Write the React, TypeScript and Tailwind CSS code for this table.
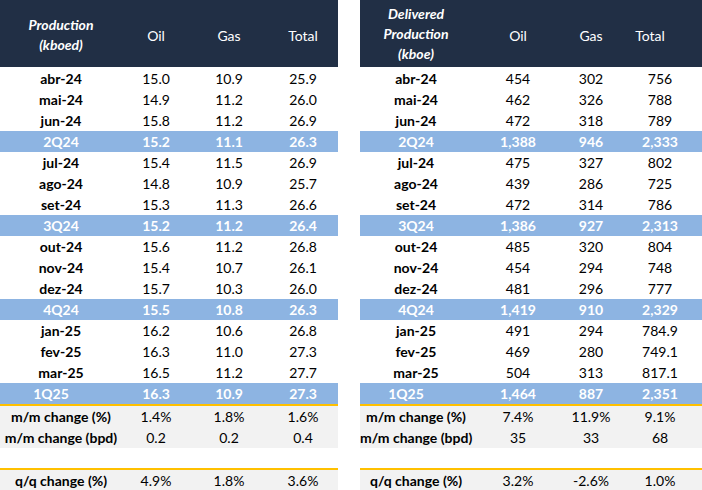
import React from "react";

type Row = { label: string; v: string[]; q?: boolean };

const leftRows: Row[] = [
  { label: "abr-24", v: ["15.0", "10.9", "25.9"] },
  { label: "mai-24", v: ["14.9", "11.2", "26.0"] },
  { label: "jun-24", v: ["15.8", "11.2", "26.9"] },
  { label: "2Q24", v: ["15.2", "11.1", "26.3"], q: true },
  { label: "jul-24", v: ["15.4", "11.5", "26.9"] },
  { label: "ago-24", v: ["14.8", "10.9", "25.7"] },
  { label: "set-24", v: ["15.3", "11.3", "26.6"] },
  { label: "3Q24", v: ["15.2", "11.2", "26.4"], q: true },
  { label: "out-24", v: ["15.6", "11.2", "26.8"] },
  { label: "nov-24", v: ["15.4", "10.7", "26.1"] },
  { label: "dez-24", v: ["15.7", "10.3", "26.0"] },
  { label: "4Q24", v: ["15.5", "10.8", "26.3"], q: true },
  { label: "jan-25", v: ["16.2", "10.6", "26.8"] },
  { label: "fev-25", v: ["16.3", "11.0", "27.3"] },
  { label: "mar-25", v: ["16.5", "11.2", "27.7"] },
  { label: "1Q25", v: ["16.3", "10.9", "27.3"], q: true },
];

const rightRows: Row[] = [
  { label: "abr-24", v: ["454", "302", "756"] },
  { label: "mai-24", v: ["462", "326", "788"] },
  { label: "jun-24", v: ["472", "318", "789"] },
  { label: "2Q24", v: ["1,388", "946", "2,333"], q: true },
  { label: "jul-24", v: ["475", "327", "802"] },
  { label: "ago-24", v: ["439", "286", "725"] },
  { label: "set-24", v: ["472", "314", "786"] },
  { label: "3Q24", v: ["1,386", "927", "2,313"], q: true },
  { label: "out-24", v: ["485", "320", "804"] },
  { label: "nov-24", v: ["454", "294", "748"] },
  { label: "dez-24", v: ["481", "296", "777"] },
  { label: "4Q24", v: ["1,419", "910", "2,329"], q: true },
  { label: "jan-25", v: ["491", "294", "784.9"] },
  { label: "fev-25", v: ["469", "280", "749.1"] },
  { label: "mar-25", v: ["504", "313", "817.1"] },
  { label: "1Q25", v: ["1,464", "887", "2,351"], q: true },
];

const leftChanges = {
  mm: ["1.4%", "1.8%", "1.6%"],
  bpd: ["0.2", "0.2", "0.4"],
  qq: ["4.9%", "1.8%", "3.6%"],
};

const rightChanges = {
  mm: ["7.4%", "11.9%", "9.1%"],
  bpd: ["35", "33", "68"],
  qq: ["3.2%", "-2.6%", "1.0%"],
};

function Table({
  title,
  rows,
  changes,
  cols,
  totalHeadPad,
  titlePad,
}: {
  title: string[];
  rows: Row[];
  changes: { mm: string[]; bpd: string[]; qq: string[] };
  cols: string;
  totalHeadPad: string;
  titlePad: string;
}) {
  return (
    <div className="flex flex-col">
      <div className={`grid ${cols} h-[67px] items-center bg-[#212f45] text-[14px] text-white`}>
        <div className={`flex flex-col items-center leading-[20px] font-bold italic ${titlePad}`}>
          {title.map((t) => (
            <span key={t}>{t}</span>
          ))}
        </div>
        <div className="pt-[3px] text-center">Oil</div>
        <div className="pt-[3px] text-center">Gas</div>
        <div className={`pt-[3px] text-center ${totalHeadPad}`}>Total</div>
      </div>
      <div className="h-px" />
      {rows.map((r) => (
        <div
          key={r.label}
          className={`grid ${cols} h-[21px] items-center text-[14px] ${
            r.q ? "bg-[#8db4e2] font-bold text-white" : "text-black"
          }`}
        >
          <div className={`text-center font-bold ${r.label === "1Q25" ? "pr-[20px]" : ""}`}>{r.label}</div>
          {r.v.map((x, i) => (
            <div key={i} className="text-center">
              {x}
            </div>
          ))}
        </div>
      ))}
      <div className="h-[2px] bg-[#ffc000]" />
      <div className="bg-[#f2f2f2] text-[14px] text-black">
        <div className={`grid ${cols} h-[21px] items-center`}>
          <div className="text-center font-bold">m/m change (%)</div>
          {changes.mm.map((x, i) => (
            <div key={i} className="text-center">
              {x}
            </div>
          ))}
        </div>
        <div className={`grid ${cols} h-[21px] items-center`}>
          <div className="whitespace-nowrap text-center font-bold">m/m change (bpd)</div>
          {changes.bpd.map((x, i) => (
            <div key={i} className="text-center">
              {x}
            </div>
          ))}
        </div>
      </div>
      <div className="h-[20px]" />
      <div className="h-[2px] bg-[#ffc000]" />
      <div className={`grid ${cols} h-[20px] items-center bg-[#f2f2f2] text-[14px] text-black`}>
        <div className="text-center font-bold">q/q change (%)</div>
        {changes.qq.map((x, i) => (
          <div key={i} className="text-center">
            {x}
          </div>
        ))}
      </div>
    </div>
  );
}

export default function App() {
  return (
    <div
      className="flex h-[490px] w-[702px] gap-[22px] overflow-hidden bg-white"
      style={{ fontFamily: "Lato, 'Open Sans', sans-serif" }}
    >
      <div className="w-[338px]">
        <Table
          title={["Production", "(kboed)"]}
          rows={leftRows}
          changes={leftChanges}
          cols="grid-cols-[122px_68px_78px_70px]"
          totalHeadPad=""
          titlePad="pt-[3px]"
        />
      </div>
      <div className="w-[342px]">
        <Table
          title={["Delivered", "Production", "(kboe)"]}
          rows={rightRows}
          changes={rightChanges}
          cols="grid-cols-[112px_92px_54px_84px]"
          totalHeadPad="pr-[20px]"
          titlePad=""
        />
      </div>
    </div>
  );
}
